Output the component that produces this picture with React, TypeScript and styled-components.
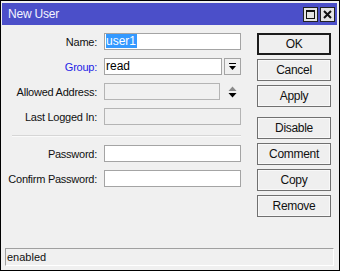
import React from 'react';
import styled, { createGlobalStyle } from 'styled-components';

const Global = createGlobalStyle`
  html, body { margin: 0; padding: 0; background: #f0f0f0; }
  body { font-family: "Liberation Sans", Arial, sans-serif; }
`;

const Window = styled.div`
  width: 340px;
  height: 271px;
  box-sizing: border-box;
  border: 1px solid #000;
  padding: 2px 2px 1px 1px;
  background: #f0f0f0;
  display: flex;
  flex-direction: column;
`;

const TitleBar = styled.div`
  height: 22px;
  background: #4b4fc9;
  display: flex;
  align-items: center;
  padding: 0 2px 0 6px;
`;

const Title = styled.span`
  flex: 1;
  color: #f4f4ff;
  font-size: 12px;
  letter-spacing: -0.2px;
`;

const TitleButton = styled.div`
  width: 13px;
  height: 13px;
  margin-left: 2px;
  background: #e4e4e4;
  border: 1px solid #222;
  display: flex;
  align-items: center;
  justify-content: center;
`;

const Body = styled.div`
  flex: 1;
  display: flex;
  flex-direction: column;
`;

const Content = styled.div`
  display: flex;
  padding: 8px 0 0 8px;
  gap: 16px;
`;

const Form = styled.div`
  display: grid;
  grid-template-columns: 87px 137px;
  column-gap: 7px;
  row-gap: 8px;
  align-items: center;
  align-content: start;
`;

const Label = styled.div<{ $link?: boolean }>`
  justify-self: end;
  white-space: nowrap;
  font-size: 11px;
  letter-spacing: -0.25px;
  color: ${p => (p.$link ? '#2323e6' : '#111')};
`;

const FieldRow = styled.div`
  display: flex;
  align-items: center;
  gap: 2px;
`;

const Field = styled.div<{ $disabled?: boolean; $w?: number }>`
  box-sizing: border-box;
  width: ${p => (p.$w ? `${p.$w}px` : '100%')};
  height: 17px;
  border: 1px solid ${p => (p.$disabled ? '#b4b4b4' : '#a4a4a4')};
  background: ${p => (p.$disabled ? '#f0f0f0' : '#fff')};
  font-size: 12px;
  line-height: 15px;
  padding-left: 1px;
  color: #000;
  overflow: hidden;
  white-space: nowrap;
`;

const Selected = styled.span`
  background: #3399ff;
  color: #fff;
  padding: 0 1px 0 0;
`;

const DropButton = styled.div`
  box-sizing: border-box;
  width: 17px;
  height: 17px;
  border: 1px solid #a4a4a4;
  background: #f0f0f0;
  display: flex;
  align-items: center;
  justify-content: center;
`;

const Arrows = styled.div`
  width: 17px;
  height: 17px;
  margin-left: 2px;
  display: flex;
  align-items: center;
  justify-content: center;
`;

const Separator = styled.div`
  grid-column: 1 / 3;
  margin: 2px 0 0 2px;
  height: 1px;
  background: #d6d6d6;
  border-bottom: 1px solid #fafafa;
`;

const ButtonColumn = styled.div`
  display: flex;
  flex-direction: column;
  width: 74px;
`;

const ButtonGroup = styled.div`
  display: flex;
  flex-direction: column;
  gap: 4px;
  & + & { margin-top: 10px; }
`;

const Button = styled.div<{ $default?: boolean }>`
  box-sizing: border-box;
  height: 22px;
  border: ${p => (p.$default ? '2px solid #1c1c1c' : '1px solid #707070')};
  box-shadow: ${p => (p.$default ? 'none' : 'inset 0 0 0 1px #f8f8f8')};
  background: #efefef;
  display: flex;
  align-items: center;
  justify-content: center;
  font-size: 12px;
  letter-spacing: -0.3px;
  color: #111;
`;

const StatusBar = styled.div`
  margin: auto 3px 3px 3px;
  height: 18px;
  box-sizing: border-box;
  border-top: 1px solid #a0a0a0;
  border-left: 1px solid #a0a0a0;
  border-right: 1px solid #fff;
  border-bottom: 1px solid #fff;
  font-size: 11px;
  line-height: 16px;
  padding-left: 1px;
  color: #111;
`;

const MaxIcon = () => (
  <svg width="9" height="9" viewBox="0 0 9 9">
    <rect x="0.5" y="0.5" width="8" height="8" fill="none" stroke="#111" />
    <line x1="0" y1="1.5" x2="9" y2="1.5" stroke="#111" />
  </svg>
);

const CloseIcon = () => (
  <svg width="9" height="9" viewBox="0 0 9 9">
    <path d="M1 1 L8 8 M8 1 L1 8" stroke="#111" strokeWidth="2" />
  </svg>
);

const DropIcon = () => (
  <svg width="9" height="8" viewBox="0 0 9 8">
    <rect x="1" y="0" width="7" height="1" fill="#000" />
    <path d="M1 3 H8 L4.5 7 Z" fill="#000" />
  </svg>
);

const UpDownIcon = () => (
  <svg width="9" height="12" viewBox="0 0 9 12">
    <path d="M0.5 5 H8.5 L4.5 0.5 Z" fill="#8a8a8a" />
    <path d="M0.5 7 H8.5 L4.5 11.5 Z" fill="#000" />
  </svg>
);

export default function App() {
  return (
    <>
      <Global />
      <Window>
        <TitleBar>
          <Title>New User</Title>
          <TitleButton><MaxIcon /></TitleButton>
          <TitleButton><CloseIcon /></TitleButton>
        </TitleBar>
        <Body>
          <Content>
            <Form>
              <Label>Name:</Label>
              <Field><Selected>user1</Selected></Field>

              <Label $link>Group:</Label>
              <FieldRow>
                <Field $w={118}>read</Field>
                <DropButton><DropIcon /></DropButton>
              </FieldRow>

              <Label>Allowed Address:</Label>
              <FieldRow>
                <Field $disabled $w={118} />
                <Arrows><UpDownIcon /></Arrows>
              </FieldRow>

              <Label>Last Logged In:</Label>
              <Field $disabled />

              <Separator />

              <Label>Password:</Label>
              <Field />

              <Label>Confirm Password:</Label>
              <Field />
            </Form>
            <ButtonColumn>
              <ButtonGroup>
                <Button $default>OK</Button>
                <Button>Cancel</Button>
                <Button>Apply</Button>
              </ButtonGroup>
              <ButtonGroup>
                <Button>Disable</Button>
                <Button>Comment</Button>
                <Button>Copy</Button>
                <Button>Remove</Button>
              </ButtonGroup>
            </ButtonColumn>
          </Content>
          <StatusBar>enabled</StatusBar>
        </Body>
      </Window>
    </>
  );
}
